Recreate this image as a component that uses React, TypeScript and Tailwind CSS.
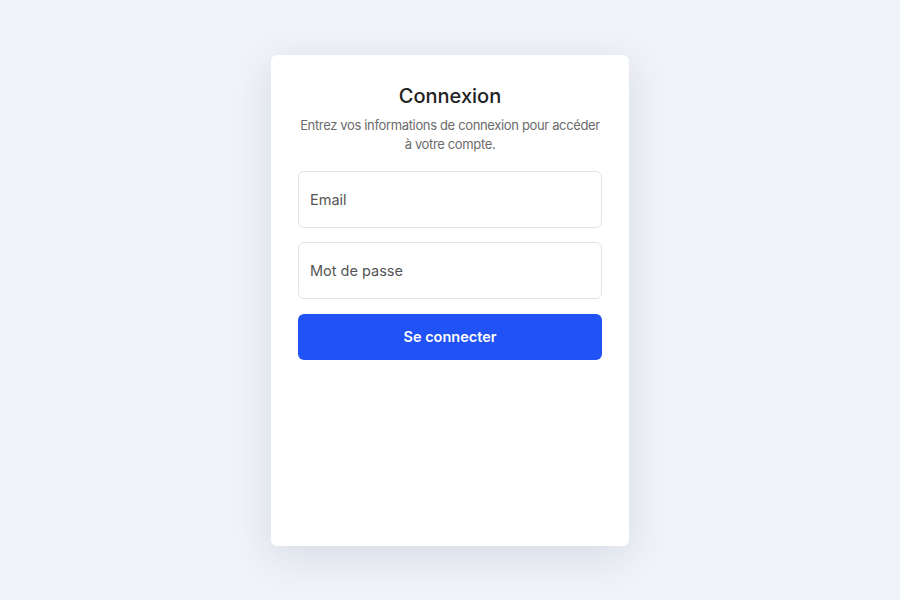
import React from 'react';

export default function App() {
  return (
    <div
      className="flex h-screen w-full items-center justify-center bg-[#f0f3f8]"
      style={{ fontFamily: 'Inter, "Noto Sans", sans-serif' }}
    >
      <div className="flex h-[491px] w-[358px] flex-col rounded-md bg-white px-[27px] pt-[27px] shadow-[0_10px_40px_rgba(30,50,90,0.12)]">
        <h1 className="text-center text-[20px] font-medium leading-[28px] text-[#222]">Connexion</h1>
        <p className="mt-[6px] text-center text-[13px] leading-[19px] tracking-[-0.35px] text-[#6b6b6b]">
          Entrez vos informations de connexion pour accéder à votre compte.
        </p>
        <form className="mt-[17px] flex flex-col" onSubmit={(e) => e.preventDefault()}>
          <input
            type="email"
            placeholder="Email"
            className="h-[57px] w-full rounded-md border border-[#e2e4e8] px-[11px] text-[14.5px] text-[#333] outline-none placeholder:text-[#555]"
          />
          <input
            type="password"
            placeholder="Mot de passe"
            className="mt-[14px] h-[57px] w-full rounded-md border border-[#e2e4e8] px-[11px] text-[14.5px] text-[#333] outline-none placeholder:text-[#555]"
          />
          <button
            type="submit"
            className="mt-[15px] h-[46px] w-full rounded-md bg-[#2152f5] text-[14.5px] font-semibold text-white"
          >
            Se connecter
          </button>
        </form>
      </div>
    </div>
  );
}
